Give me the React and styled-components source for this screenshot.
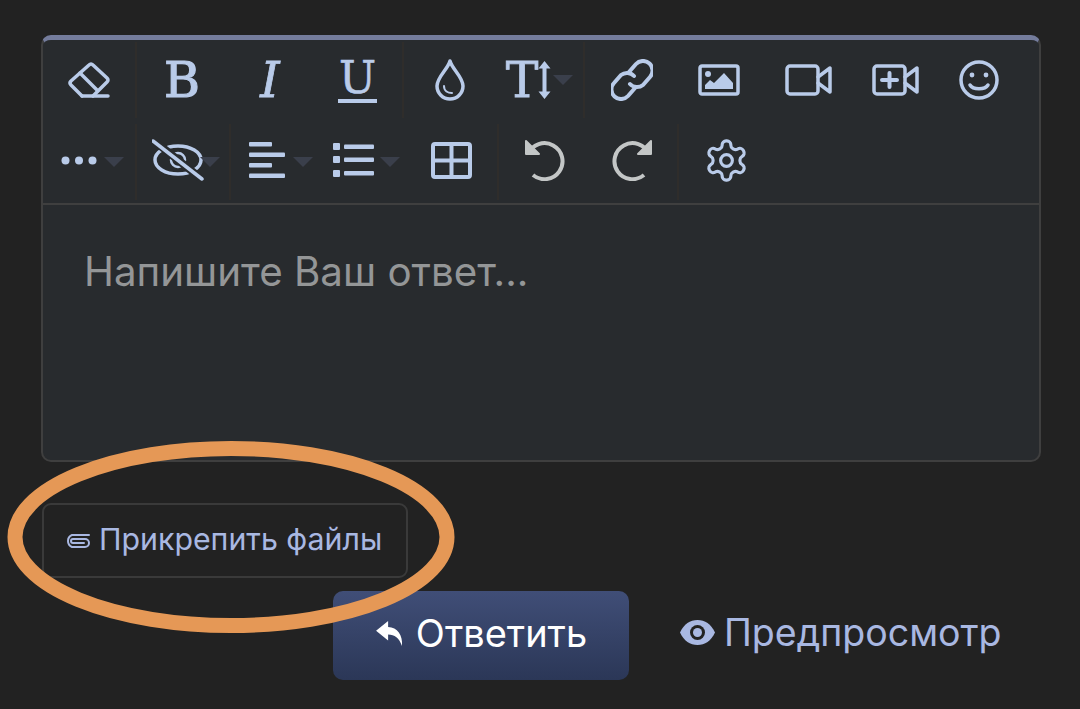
import React from 'react';
import styled, { createGlobalStyle } from 'styled-components';

const GlobalStyle = createGlobalStyle`
	html, body {
		margin: 0;
		padding: 0;
		background: #222222;
	}
`;

const Page = styled.div`
	position: relative;
	width: 1080px;
	height: 709px;
	overflow: hidden;
	box-sizing: border-box;
	padding: 35px 39px 0 41px;
	background: #222222;
	font-family: Inter, Roboto, "Noto Sans", sans-serif;
`;

const Editor = styled.div`
	height: 427px;
	box-sizing: border-box;
	background: #282b2e;
	border: 2px solid #3f3f3f;
	border-top: 5px solid #747c9c;
	border-radius: 10px;
`;

const Toolbar = styled.div`
	height: 165px;
	box-sizing: border-box;
	border-bottom: 2px solid #3f3f3f;
`;

const ToolRow = styled.div`
	display: flex;
	height: 82px;
`;

const Group = styled.div`
	display: flex;
	height: 76px;
	box-sizing: border-box;
	margin-top: 2px;
	border-right: ${props => props.$last ? 'none' : '2px solid #2f2d2b'};
`;

const ToolButton = styled.div`
	width: ${props => props.$w}px;
	height: ${props => props.$low ? 72 : 76}px;
	box-sizing: border-box;
	padding-right: ${props => props.$pr || 0}px;
	position: relative;
	display: flex;
	align-items: center;
	justify-content: center;
	color: ${props => props.$muted ? '#c3c6c6' : '#b9cbe9'};
	svg { display: block; flex: none; }
`;

const Caret = styled.span`
	position: absolute;
	left: ${props => props.$left}px;
	top: 33px;
	width: 0;
	height: 0;
	border-left: 10px solid transparent;
	border-right: 10px solid transparent;
	border-top: 10px solid #3a3f4b;
`;

const Glyph = styled.span`
	font-family: "DejaVu Serif", serif;
	font-size: 49px;
	line-height: 49px;
	font-style: ${props => props.$italic ? 'italic' : 'normal'};
	-webkit-text-stroke: ${props => props.$stroke || 0}px #b9cbe9;
	color: #b9cbe9;
`;

const Underlined = styled(Glyph)`
	font-size: 44px;
	line-height: 40px;
	padding: 0 1px 1px;
	border-bottom: 4px solid #b9cbe9;
`;

const TextArea = styled.div`
	padding: 45px 41px;
	font-size: 40.3px;
	line-height: 44px;
	color: #949697;
`;

const AttachButton = styled.div`
	display: flex;
	align-items: center;
	gap: 8px;
	width: 366px;
	height: 75px;
	box-sizing: border-box;
	margin: 41px 0 0 1px;
	padding: 0 0 3px 20px;
	border: 2px solid #3a3a3a;
	border-radius: 9px;
	font-size: 30.3px;
	color: #a9b8e2;
`;

const Footer = styled.div`
	display: flex;
	justify-content: flex-end;
	align-items: center;
	margin: 13px 1px 0 0;
`;

const ReplyButton = styled.div`
	width: 296px;
	height: 89px;
	box-sizing: border-box;
	padding-bottom: 5px;
	display: flex;
	align-items: center;
	justify-content: center;
	gap: 12px;
	border-radius: 10px;
	background: linear-gradient(#404e77, #2b3757);
	color: #ffffff;
	font-size: 38px;
`;

const PreviewButton = styled.div`
	width: 411px;
	box-sizing: border-box;
	padding: 0 0 6px 51px;
	display: flex;
	align-items: center;
	gap: 9px;
	color: #a9b8e2;
	font-size: 37.5px;
`;

const Mark = styled.svg`
	position: absolute;
	left: 0;
	top: 0;
	pointer-events: none;
`;

const Icon = ({w, h, children, sw = 3.5}) => (
	<svg width={w} height={h} viewBox={`0 0 ${w} ${h}`} fill="none" stroke="currentColor" strokeWidth={sw} strokeLinecap="round" strokeLinejoin="round">
		{children}
	</svg>
);

const Eraser = () => (
	<Icon w={42} h={36}>
		<path d="M14 34 L3 23 Q1 21 3 19 L21 3 Q23 1 25 3 L39 16 Q41 18 39 20 L25 34" />
		<path d="M14 34 H40" />
		<path d="M12 11 L29 28" />
	</Icon>
);

const Drop = () => (
	<Icon w={30} h={42}>
		<path d="M15 2 C17 10 28 18 28 27 A13 13 0 0 1 2 27 C2 18 13 10 15 2 Z" />
		<path d="M9 27 C9 32 13 34 17 34" strokeWidth={2} />
	</Icon>
);

const UpDown = () => (
	<svg width={13} height={38} viewBox="0 0 13 38" fill="currentColor">
		<path d="M6.5 0 L12.5 7.5 H8.5 V30.5 H12.5 L6.5 38 L0.5 30.5 H4.5 V7.5 H0.5 Z" />
	</svg>
);

const Chain = () => (
	<Icon w={42} h={42} sw={4}>
		<path d="M18 13 L25 5 A9.5 9.5 0 0 1 39 18 L32 26 A9.5 9.5 0 0 1 19 25" />
		<path d="M24 29 L17 37 A9.5 9.5 0 0 1 3 24 L10 16 A9.5 9.5 0 0 1 23 17" />
	</Icon>
);

const Picture = () => (
	<svg width={42} height={32} viewBox="0 0 42 32">
		<rect x="2" y="2" width="38" height="28" rx="2" fill="none" stroke="currentColor" strokeWidth="3.5" />
		<circle cx="10" cy="10" r="3" fill="currentColor" />
		<path d="M7 25 V21 L12 16 L16 19 L26 9 L35 19 V25 Z" fill="currentColor" />
	</svg>
);

const Camera = ({plus}) => (
	<Icon w={47} h={32}>
		<rect x="2" y="2" width="31" height="28" rx="3" />
		<path d="M33 13 L45 4 V28 L33 19" />
		{plus && <path d="M10 16 H25 M17.5 9 V23" strokeWidth={4} />}
	</Icon>
);

const Smile = () => (
	<Icon w={40} h={40}>
		<circle cx="20" cy="20" r="18" />
		<circle cx="13" cy="15" r="2.4" fill="currentColor" stroke="none" />
		<circle cx="27" cy="15" r="2.4" fill="currentColor" stroke="none" />
		<path d="M11 25 C14 30 26 30 29 25" />
	</Icon>
);

const Dots = () => (
	<svg width={36} height={9} viewBox="0 0 36 9" fill="currentColor">
		<circle cx="4.5" cy="4.5" r="4" />
		<circle cx="18" cy="4.5" r="4" />
		<circle cx="31.5" cy="4.5" r="4" />
	</svg>
);

const EyeOff = () => (
	<svg width={52} height={42} viewBox="0 0 52 42" fill="none" stroke="currentColor" strokeWidth="3.5" strokeLinecap="round">
		<ellipse cx="26" cy="21" rx="23" ry="14" />
		<circle cx="26" cy="21" r="7" strokeWidth="2.5" />
		<path d="M1 1 L51 41" stroke="#282b2e" strokeWidth="8" />
		<path d="M1 2 L50 40" />
	</svg>
);

const AlignLeft = () => (
	<svg width={36} height={36} viewBox="0 0 36 36" fill="currentColor">
		<rect y="0" width="23" height="4.5" rx="1" />
		<rect y="10.5" width="36" height="4.5" rx="1" />
		<rect y="21" width="23" height="4.5" rx="1" />
		<rect y="31.5" width="36" height="4.5" rx="1" />
	</svg>
);

const ListIcon = () => (
	<svg width={41} height={34} viewBox="0 0 41 34" fill="currentColor">
		<rect y="0" width="7" height="7" rx="1" />
		<rect y="13" width="7" height="7" rx="1" />
		<rect y="27" width="7" height="7" rx="1" />
		<rect x="11" y="1.5" width="30" height="4.5" rx="1" />
		<rect x="11" y="14.5" width="30" height="4.5" rx="1" />
		<rect x="11" y="28" width="30" height="4.5" rx="1" />
	</svg>
);

const TableIcon = () => (
	<svg width={41} height={37} viewBox="0 0 41 37" fill="none" stroke="currentColor" strokeWidth="4">
		<rect x="2" y="2" width="37" height="33" rx="2" />
		<path d="M2 18.5 H39 M20.5 2 V35" />
	</svg>
);

const Undo = ({flip}) => (
	<svg width={42} height={42} viewBox="0 0 42 42" fill="none" style={flip ? {transform: 'scaleX(-1)'} : undefined}>
		<path d="M5 15 A18 18 0 1 1 10 36" stroke="currentColor" strokeWidth="4" />
		<path d="M3 2 V15 H16 Z" fill="currentColor" stroke="currentColor" strokeWidth="2" strokeLinejoin="round" />
	</svg>
);

const Gear = () => (
	<svg width={47} height={47} viewBox="0 0 24 24" fill="none" stroke="currentColor" strokeWidth="1.6" strokeLinejoin="round">
		<path d="M12.22 2h-.44a2 2 0 0 0-2 2v.18a2 2 0 0 1-1 1.73l-.43.25a2 2 0 0 1-2 0l-.15-.08a2 2 0 0 0-2.73.73l-.22.38a2 2 0 0 0 .73 2.73l.15.1a2 2 0 0 1 1 1.72v.51a2 2 0 0 1-1 1.74l-.15.09a2 2 0 0 0-.73 2.73l.22.38a2 2 0 0 0 2.73.73l.15-.08a2 2 0 0 1 2 0l.43.25a2 2 0 0 1 1 1.73V20a2 2 0 0 0 2 2h.44a2 2 0 0 0 2-2v-.18a2 2 0 0 1 1-1.73l.43-.25a2 2 0 0 1 2 0l.15.08a2 2 0 0 0 2.73-.73l.22-.39a2 2 0 0 0-.73-2.73l-.15-.08a2 2 0 0 1-1-1.74v-.5a2 2 0 0 1 1-1.74l.15-.09a2 2 0 0 0 .73-2.73l-.22-.38a2 2 0 0 0-2.73-.73l-.15.08a2 2 0 0 1-2 0l-.43-.25a2 2 0 0 1-1-1.73V4a2 2 0 0 0-2-2z" />
		<circle cx="12" cy="12" r="3" />
	</svg>
);

const Clip = () => (
	<svg width={27} height={17} viewBox="0 0 27 17" fill="none" stroke="#a9b8e2" strokeWidth="2" strokeLinecap="round">
		<path d="M25 4 H8 A6.5 6.5 0 0 0 8 16 H21 A4 4 0 0 0 21 8 H9 A1.5 1.5 0 0 0 9 12 H20" />
	</svg>
);

const ReplyArrow = () => (
	<svg width={29} height={25} viewBox="0 0 29 27" fill="#ffffff">
		<path d="M13 0 L0 10.5 L13 21 V14.5 C20 14.5 25 18 28 27 C29 15 23 7 13 6.5 Z" />
	</svg>
);

const EyeFilled = () => (
	<svg width={35} height={25} viewBox="0 0 35 25">
		<path d="M0 12.5 C4 4 10 0 17.5 0 C25 0 31 4 35 12.5 C31 21 25 25 17.5 25 C10 25 4 21 0 12.5 Z" fill="#a9b8e2" />
		<circle cx="17.5" cy="12.5" r="7.5" fill="#222222" />
		<circle cx="17.5" cy="12.5" r="4.5" fill="#a9b8e2" />
	</svg>
);

const App = () => (
	<Page>
		<GlobalStyle />
		<Editor>
			<Toolbar>
				<ToolRow>
					<Group>
						<ToolButton $w={92}><Eraser /></ToolButton>
					</Group>
					<Group>
						<ToolButton $w={90}><Glyph $stroke={1.2}>B</Glyph></ToolButton>
						<ToolButton $w={86}><Glyph $italic $stroke={0.8}>I</Glyph></ToolButton>
						<ToolButton $w={89}><Underlined $stroke={0.6}>U</Underlined></ToolButton>
					</Group>
					<Group>
						<ToolButton $w={92}><Drop /></ToolButton>
						<ToolButton $w={87} $pr={22}>
							<Glyph $stroke={0.8}>T</Glyph>
							<UpDown />
							<Caret $left={57} />
						</ToolButton>
					</Group>
					<Group $last>
						<ToolButton $w={94}><Chain /></ToolButton>
						<ToolButton $w={79}><Picture /></ToolButton>
						<ToolButton $w={100}><Camera /></ToolButton>
						<ToolButton $w={74}><Camera plus /></ToolButton>
						<ToolButton $w={93}><Smile /></ToolButton>
					</Group>
				</ToolRow>
				<ToolRow>
					<Group>
						<ToolButton $w={92} $low $pr={21}>
							<Dots />
							<Caret $left={61} />
						</ToolButton>
					</Group>
					<Group>
						<ToolButton $w={92} $low $pr={10}>
							<EyeOff />
							<Caret $left={63} />
						</ToolButton>
					</Group>
					<Group>
						<ToolButton $w={87} $low $pr={15}>
							<AlignLeft />
							<Caret $left={62} />
						</ToolButton>
						<ToolButton $w={87} $low $pr={16}>
							<ListIcon />
							<Caret $left={62} />
						</ToolButton>
						<ToolButton $w={92} $low><TableIcon /></ToolButton>
					</Group>
					<Group>
						<ToolButton $w={90} $low $muted><Undo /></ToolButton>
						<ToolButton $w={88} $low $muted><Undo flip /></ToolButton>
					</Group>
					<Group $last>
						<ToolButton $w={94} $low><Gear /></ToolButton>
					</Group>
				</ToolRow>
			</Toolbar>
			<TextArea>Напишите Ваш ответ...</TextArea>
		</Editor>
		<AttachButton><Clip />Прикрепить файлы</AttachButton>
		<Footer>
			<ReplyButton><ReplyArrow />Ответить</ReplyButton>
			<PreviewButton><EyeFilled />Предпросмотр</PreviewButton>
		</Footer>
		<Mark width="1080" height="709" viewBox="0 0 1080 709" fill="none">
			<ellipse cx="231" cy="537" rx="216" ry="88.5" stroke="#e59856" strokeWidth="15" />
		</Mark>
	</Page>
);

export default App;
